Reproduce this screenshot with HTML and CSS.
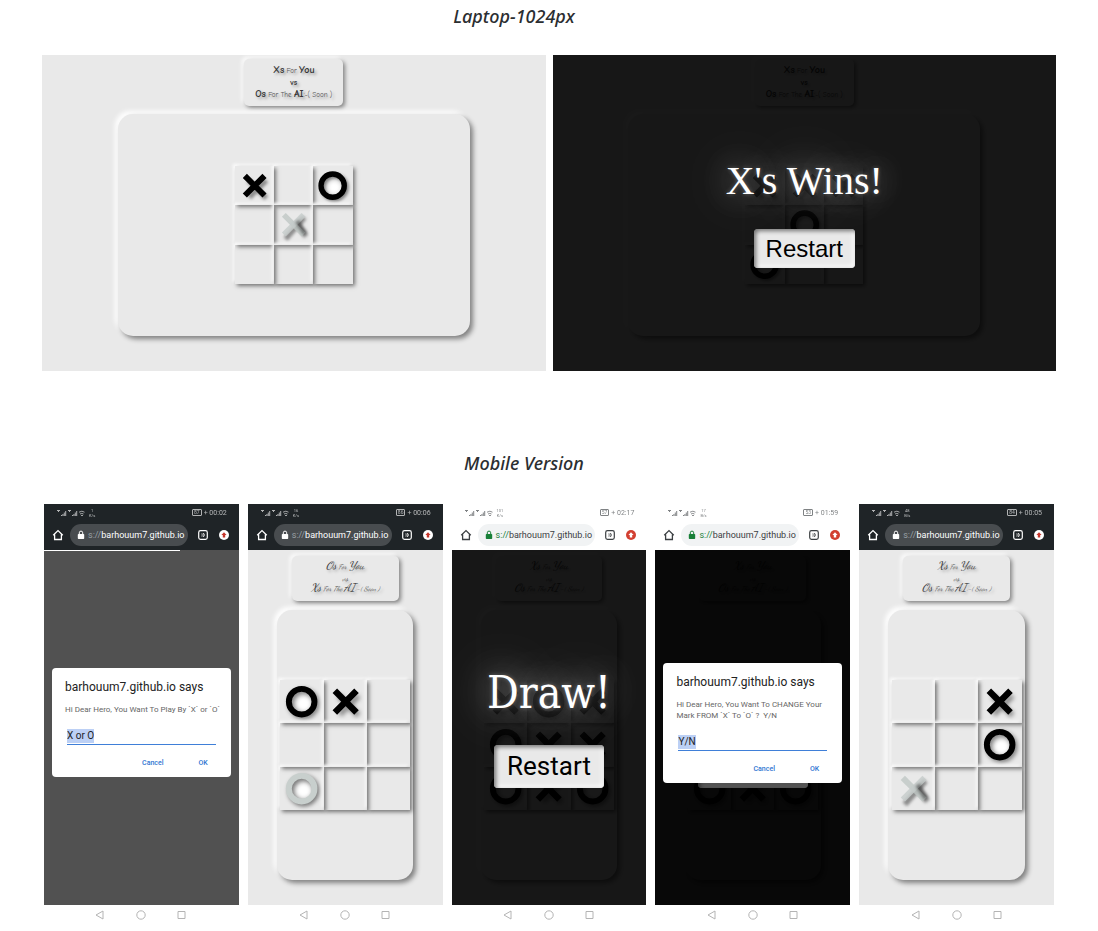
FILE: index.html
```html
<!DOCTYPE html>
<html lang="en">
<head>
<meta charset="utf-8">
<meta name="viewport" content="width=device-width, initial-scale=1">
<title>Tic Tac Toe previews</title>
<link rel="stylesheet" href="styles.css">
</head>
<body>
<svg class="sprite" aria-hidden="true">
  <defs>
    <filter id="soft" x="-50%" y="-50%" width="200%" height="200%"><feGaussianBlur stdDeviation="1.6"/></filter>
    <filter id="softer" x="-50%" y="-50%" width="200%" height="200%"><feGaussianBlur stdDeviation="2"/></filter>
  </defs>
  <symbol id="x" viewBox="0 0 44 44">
    <path d="M14 15l20 20M34 15L15 34" transform="translate(1 1)" stroke="#000" stroke-opacity=".4" stroke-width="6" filter="url(#softer)" fill="none"/>
    <path d="M11 11l22 22M33 11L11 33" stroke="#000" stroke-width="6.500" fill="none"/>
  </symbol>
  <symbol id="o" viewBox="0 0 44 44">
    <circle cx="24" cy="24" r="13" stroke="#000" stroke-opacity=".45" stroke-width="6" filter="url(#softer)" fill="none"/>
    <circle cx="24" cy="24" r="6" fill="#fff" filter="url(#soft)"/>
    <circle cx="22" cy="22" r="13" stroke="#000" stroke-width="6" fill="none"/>
  </symbol>
  <symbol id="x-ghost" viewBox="0 0 44 44">
    <path d="M24 20l12 15M34 14L13 38" stroke="#000" stroke-opacity=".4" stroke-width="6" filter="url(#soft)" fill="none"/>
    <path d="M11 11l22 22" stroke="#bfc7c4" stroke-opacity=".8" stroke-width="6" fill="none"/>
    <path d="M33 11L11 33" stroke="#c5ccca" stroke-opacity=".8" stroke-width="6" fill="none"/>
    <path d="M26 18l9 14" stroke="#000" stroke-opacity=".4" stroke-width="5" filter="url(#soft)" fill="none"/>
  </symbol>
  <symbol id="o-ghost" viewBox="0 0 44 44">
    <circle cx="24" cy="24" r="13" stroke="#000" stroke-opacity=".5" stroke-width="6" filter="url(#softer)" fill="none"/>
    <circle cx="24" cy="24" r="6" fill="#fff" filter="url(#soft)"/>
    <circle cx="22" cy="22" r="13" stroke="#c8cfcd" stroke-width="6" fill="none"/>
  </symbol>
  <symbol id="signal" viewBox="0 0 28 8">
    <g fill="currentColor">
      <path d="M0 1h3v1H0zM1 2h1v1H1zM4 6h1v1H4zM5.400 5h1v2h-1zM6.800 3.600h1V7h-1zM8.200 2h1v5h-1z"/>
      <path d="M11 1h3v1h-3zM12 2h1v1h-1zM15 6h1v1h-1zM16.400 5h1v2h-1zM17.800 3.600h1V7h-1zM19.200 2h1v5h-1z"/>
    </g>
    <path d="M22 3.200q3-2 5.500 0M23 5q1.800-1.200 3.500 0M24 6.500h2" fill="none" stroke="currentColor" stroke-width=".9"/>
  </symbol>
  <symbol id="home" viewBox="0 0 12 12"><path d="M1.200 6.200L6 1.600l4.800 4.600M2.600 5.400v5.100h6.800V5.400" fill="none" stroke="currentColor" stroke-width="1.300"/></symbol>
  <symbol id="lock" viewBox="0 0 8 10"><rect x=".8" y="4" width="6.400" height="5" rx=".7" fill="currentColor"/><path d="M2.300 4V2.800a1.700 1.700 0 0 1 3.400 0V4" fill="none" stroke="currentColor"/></symbol>
  <symbol id="tabs" viewBox="0 0 10 10"><rect x=".7" y=".7" width="8.600" height="8.600" rx="1.800" fill="none" stroke="currentColor" stroke-width="1.200"/><path d="M3.300 4h.8M3.300 6h.8M5 3.500h.8q1.300 1.500 0 3H5z" fill="none" stroke="currentColor" stroke-width=".8"/></symbol>
  <symbol id="update" viewBox="0 0 10 10"><circle class="disc" cx="5" cy="5" r="5"/><path class="arrow" d="M5 2.200L7.600 5H6.200v2.500H3.800V5H2.400z"/></symbol>
  <symbol id="keys" viewBox="0 0 92 10">
    <path d="M8 1v8L1 5zM83 1.500h7v7h-7z" fill="none" stroke="#b4b4b4"/><circle cx="46" cy="5" r="4.200" fill="none" stroke="#b4b4b4"/>
  </symbol>
</svg>

<main class="page">
  <section class="laptops">
    <h2 class="caption caption-laptop">Laptop-1024px</h2>
    <div class="laptop-row">
      <article class="screen laptop">
        <p class="card"><span><b>Xs</b> For <b>You</b></span><span><b class="vs">vs</b></span><span><b>Os</b> For The <b>AI</b>:-( Soon )</span></p>
        <div class="panel"><div class="board">
          <div class="cell"><svg><use href="#x"/></svg></div><div class="cell"></div><div class="cell"><svg><use href="#o"/></svg></div>
          <div class="cell"></div><div class="cell"><svg><use href="#x-ghost"/></svg></div><div class="cell"></div>
          <div class="cell"></div><div class="cell"></div><div class="cell"></div>
        </div></div>
      </article>
      <article class="screen laptop">
        <p class="card"><span><b>Xs</b> For <b>You</b></span><span><b class="vs">vs</b></span><span><b>Os</b> For The <b>AI</b>:-( Soon )</span></p>
        <div class="panel"><div class="board">
          <div class="cell"><svg><use href="#x"/></svg></div><div class="cell"><svg><use href="#x"/></svg></div><div class="cell"><svg><use href="#x"/></svg></div>
          <div class="cell"></div><div class="cell"><svg><use href="#o"/></svg></div><div class="cell"></div>
          <div class="cell"><svg><use href="#o"/></svg></div><div class="cell"></div><div class="cell"></div>
        </div></div>
        <div class="result"><strong class="message">X's Wins!</strong><button class="restart" type="button">Restart</button></div>
      </article>
    </div>
  </section>

  <section class="mobiles">
    <h2 class="caption caption-mobile">Mobile Version</h2>
    <div class="phone-row">

      <article class="phone">
        <header class="chrome dark">
          <div class="status"><svg class="signal"><use href="#signal"/></svg><span class="rate">1<br>K/s</span><span class="battery">87</span><span class="clock">+ 00:02</span></div>
          <div class="toolbar"><svg class="home"><use href="#home"/></svg><div class="address"><svg class="lock"><use href="#lock"/></svg><span class="url"><span class="scheme">s://</span>barhouum7.github.io</span></div><svg class="tabs"><use href="#tabs"/></svg><svg class="update"><use href="#update"/></svg></div>
        </header>
        <div class="screen mobile blank">
          <div class="backdrop">
            <div class="progress"></div>
            <form class="dialog">
              <h3 class="dialog-title">barhouum7.github.io says</h3>
              <label class="dialog-text" for="mark">Hi Dear Hero, You Want To Play By `X` or `O`</label>
              <div class="field"><input class="entry" id="mark" type="text" value="X or O"></div>
              <div class="actions"><button type="button">Cancel</button><button type="button">OK</button></div>
            </form>
          </div>
        </div>
        <footer class="keys"><svg><use href="#keys"/></svg></footer>
      </article>

      <article class="phone">
        <header class="chrome dark">
          <div class="status"><svg class="signal"><use href="#signal"/></svg><span class="rate">16<br>K/s</span><span class="battery">86</span><span class="clock">+ 00:06</span></div>
          <div class="toolbar"><svg class="home"><use href="#home"/></svg><div class="address"><svg class="lock"><use href="#lock"/></svg><span class="url"><span class="scheme">s://</span>barhouum7.github.io</span></div><svg class="tabs"><use href="#tabs"/></svg><svg class="update"><use href="#update"/></svg></div>
        </header>
        <div class="screen mobile">
          <p class="card"><span><b>Os</b> For <b>You</b></span><span class="vs">vs</span><span><b>Xs</b> For The <b>AI</b>:-( Soon )</span></p>
          <div class="panel"><div class="board">
            <div class="cell"><svg><use href="#o"/></svg></div><div class="cell"><svg><use href="#x"/></svg></div><div class="cell"></div>
            <div class="cell"></div><div class="cell"></div><div class="cell"></div>
            <div class="cell"><svg><use href="#o-ghost"/></svg></div><div class="cell"></div><div class="cell"></div>
          </div></div>
        </div>
        <footer class="keys"><svg><use href="#keys"/></svg></footer>
      </article>

      <article class="phone">
        <header class="chrome light">
          <div class="status"><svg class="signal"><use href="#signal"/></svg><span class="rate">101<br>K/s</span><span class="battery">57</span><span class="clock">+ 02:17</span></div>
          <div class="toolbar"><svg class="home"><use href="#home"/></svg><div class="address"><svg class="lock"><use href="#lock"/></svg><span class="url"><span class="scheme">s://</span>barhouum7.github.io</span></div><svg class="tabs"><use href="#tabs"/></svg><svg class="update"><use href="#update"/></svg></div>
        </header>
        <div class="screen mobile">
          <p class="card"><span><b>Xs</b> For <b>You</b></span><span class="vs">vs</span><span><b>Os</b> For The <b>AI</b>:-( Soon )</span></p>
          <div class="panel"><div class="board">
            <div class="cell"><svg><use href="#x"/></svg></div><div class="cell"><svg><use href="#o"/></svg></div><div class="cell"><svg><use href="#x"/></svg></div>
            <div class="cell"><svg><use href="#o"/></svg></div><div class="cell"><svg><use href="#x"/></svg></div><div class="cell"><svg><use href="#x"/></svg></div>
            <div class="cell"><svg><use href="#o"/></svg></div><div class="cell"><svg><use href="#x"/></svg></div><div class="cell"><svg><use href="#o"/></svg></div>
          </div></div>
          <div class="result"><strong class="message">Draw!</strong><button class="restart" type="button">Restart</button></div>
        </div>
        <footer class="keys"><svg><use href="#keys"/></svg></footer>
      </article>

      <article class="phone">
        <header class="chrome light">
          <div class="status"><svg class="signal"><use href="#signal"/></svg><span class="rate">17<br>B/s</span><span class="battery">53</span><span class="clock">+ 01:59</span></div>
          <div class="toolbar"><svg class="home"><use href="#home"/></svg><div class="address"><svg class="lock"><use href="#lock"/></svg><span class="url"><span class="scheme">s://</span>barhouum7.github.io</span></div><svg class="tabs"><use href="#tabs"/></svg><svg class="update"><use href="#update"/></svg></div>
        </header>
        <div class="screen mobile">
          <p class="card"><span><b>Xs</b> For <b>You</b></span><span class="vs">vs</span><span><b>Os</b> For The <b>AI</b>:-( Soon )</span></p>
          <div class="panel"><div class="board">
            <div class="cell"></div><div class="cell"></div><div class="cell"></div>
            <div class="cell"></div><div class="cell"></div><div class="cell"></div>
            <div class="cell"><svg><use href="#o"/></svg></div><div class="cell"><svg><use href="#x"/></svg></div><div class="cell"><svg><use href="#o"/></svg></div>
          </div></div>
          <div class="result"><strong class="message"></strong><button class="restart" type="button" aria-label="Restart"></button></div>
          <div class="backdrop">
            <form class="dialog">
              <h3 class="dialog-title">barhouum7.github.io says</h3>
              <label class="dialog-text" for="change">Hi Dear Hero, You Want To CHANGE Your Mark FROM `X` To `O` ?&nbsp; Y/N</label>
              <div class="field"><input class="entry" id="change" type="text" value="Y/N"></div>
              <div class="actions"><button type="button">Cancel</button><button type="button">OK</button></div>
            </form>
          </div>
        </div>
        <footer class="keys"><svg><use href="#keys"/></svg></footer>
      </article>

      <article class="phone">
        <header class="chrome dark">
          <div class="status"><svg class="signal"><use href="#signal"/></svg><span class="rate">48<br>B/s</span><span class="battery">84</span><span class="clock">+ 00:05</span></div>
          <div class="toolbar"><svg class="home"><use href="#home"/></svg><div class="address"><svg class="lock"><use href="#lock"/></svg><span class="url"><span class="scheme">s://</span>barhouum7.github.io</span></div><svg class="tabs"><use href="#tabs"/></svg><svg class="update"><use href="#update"/></svg></div>
        </header>
        <div class="screen mobile">
          <p class="card"><span><b>Xs</b> For <b>You</b></span><span class="vs">vs</span><span><b>Os</b> For The <b>AI</b>:-( Soon )</span></p>
          <div class="panel"><div class="board">
            <div class="cell"></div><div class="cell"></div><div class="cell"><svg><use href="#x"/></svg></div>
            <div class="cell"></div><div class="cell"></div><div class="cell"><svg><use href="#o"/></svg></div>
            <div class="cell"><svg><use href="#x-ghost"/></svg></div><div class="cell"></div><div class="cell"></div>
          </div></div>
        </div>
        <footer class="keys"><svg><use href="#keys"/></svg></footer>
      </article>

    </div>
  </section>
</main>
</body>
</html>
```

FILE: styles.css
```css
* { box-sizing: border-box; }
body { margin: 0; background: #fff; font-family: "Open Sans", sans-serif; }
.sprite { position: absolute; width: 0; height: 0; }
.page { padding: 4px 42px 6px; }

.caption {
  margin: 0;
  font: italic 500 18px/24px "Noto Sans", "Open Sans", sans-serif;
  color: #2b2e31;
  text-align: center;
}
.caption-laptop { padding-right: 70px; }
.caption-mobile { padding-right: 50px; }

.laptop-row { display: grid; grid-template-columns: repeat(2, minmax(0, 1fr)); gap: 7px; margin-top: 27px; }
.mobiles { margin-top: 80px; padding: 0 2px; }
.phone-row { display: grid; grid-template-columns: repeat(5, minmax(0, 1fr)); gap: 9px; margin-top: 29px; }

/* Game screen */
.screen { position: relative; overflow: hidden; display: flex; flex-direction: column; align-items: center; background: #e9e9e9; }
.card {
  display: flex; flex-direction: column; align-items: center; justify-content: center;
  margin: 0; white-space: nowrap; color: #555;
  border-radius: 5px;
  box-shadow: 2px 2px 4px rgba(0, 0, 0, .45), -2px -2px 4px #fff;
  text-shadow: 2px 2px 3px rgba(0, 0, 0, .35);
}
.card b { color: #333; line-height: 0; }
.panel {
  display: grid; place-items: center;
  width: 70%;
  border-radius: 15px;
  box-shadow: 3px 3px 5px rgba(0, 0, 0, .45), -3px -3px 5px #fff;
}
.board { display: grid; grid: repeat(3, 1fr) / repeat(3, 1fr); }
.cell { min-width: 0; min-height: 0; box-shadow: 2px 2px 4px rgba(0, 0, 0, .5), -2px -2px 3px #fff; }
.cell svg { display: block; width: 100%; height: 100%; }

.laptop { padding: 4px 0 35px; gap: 8px; }
.laptop .card { padding: 6px 11px 5px; font: 7px/12px "Comic Sans MS", "Comic Neue", "Open Sans", sans-serif; }
.laptop .card b { font-size: 10px; }
.laptop .card .vs { font-size: 8px; }
.laptop .panel { min-height: 222px; }
.laptop .board { width: 118px; height: 118px; }

.mobile { padding: 6px 0 25px; gap: 9px; }
.mobile .card { padding: 6px 19px; font: italic 7px/11px "Dancing Script", "Liberation Serif", serif; }
.mobile .card b { font-size: 11px; font-weight: 400; }
.mobile .card .vs { font-size: 8px; }
.mobile .panel { min-height: 270px; }
.mobile .board { width: 130px; height: 130px; }
.blank { min-height: 355px; }

/* Result overlay */
.result {
  position: absolute; inset: 0;
  display: flex; flex-direction: column; align-items: center; justify-content: center; gap: 24px;
  padding-bottom: 2px;
  background: rgba(0, 0, 0, .9);
}
.message {
  font-weight: 400; color: #fff;
  text-shadow: 0 0 4px rgba(255, 255, 255, .3), 0 0 30px rgba(255, 255, 255, .5), 0 0 60px rgba(255, 255, 255, .6);
}
.restart {
  border: 0; border-radius: 4px; background: #e9e9e9; color: #000;
  box-shadow: inset 2px 2px 4px rgba(0, 0, 0, .5), inset -2px -2px 4px #fff;
}
.laptop .message { font-family: "Liberation Serif", serif; font-size: 40px; line-height: 48px; }
.laptop .restart { padding: 5px 12px; font: 24px/29px "Liberation Sans", sans-serif; }
.mobile .message { min-height: 56px; font-family: "DejaVu Serif Condensed", "DejaVu Serif", serif; font-size: 44px; line-height: 56px; }
.mobile .restart { min-width: 110px; min-height: 43px; padding: 6px 12px; font: 26px/31px Roboto, sans-serif; }

/* Phone browser */
.phone { font-family: Roboto, sans-serif; }
.chrome { height: 46px; padding: 3px 12px 0 13px; }
.dark { background: #1f2427; color: #fff; }
.light { background: #fff; color: #3c4043; }
.status { display: flex; align-items: center; height: 11px; font-size: 7px; opacity: .65; }
.signal { width: 28px; height: 8px; }
.rate { margin-left: 4px; font-size: 4px; line-height: 5px; text-align: center; }
.battery { margin-left: auto; padding: 0 1px; border: 1px solid currentColor; border-radius: 1px; font-size: 5px; line-height: 5px; }
.clock { margin-left: 2px; }
.toolbar { display: flex; align-items: center; margin: 6px -4px 0 -5px; }
.home { flex: none; width: 12px; height: 12px; margin-right: 6px; }
.address { display: flex; align-items: center; gap: 3px; flex: 1; min-width: 0; height: 22px; padding-left: 7px; border-radius: 11px; }
.dark .address { background: #484c4f; }
.light .address { background: #f1f3f4; }
.lock { flex: none; width: 8px; height: 10px; }
.light .lock, .light .scheme { color: #188038; }
.dark .scheme { color: #9aa0a6; }
.url { font-size: 9px; line-height: 12px; white-space: nowrap; }
.tabs { flex: none; width: 10px; height: 10px; margin-left: 10px; }
.update { flex: none; width: 10px; height: 10px; margin: 0 2px 0 11px; }
.dark .update { --disc: #fff; --arrow: #c5362b; }
.light .update { --disc: #d23f31; --arrow: #fff; }
.disc { fill: var(--disc); }
.arrow { fill: var(--arrow); }
.keys { display: grid; place-items: center; height: 20px; }
.keys svg { width: 92px; height: 10px; }

/* Prompt dialog */
.backdrop {
  position: absolute; inset: 0;
  display: grid; place-items: center;
  padding: 0 8px 10px;
  background: rgba(0, 0, 0, .65);
}
.progress { position: absolute; top: 0; left: 0; width: 70%; height: 1px; background: #fff; }
.dialog { width: 100%; padding: 12px 10px 8px 13px; border-radius: 4px; background: #fff; }
.dialog-title { margin: 0 0 10px; font-size: 12px; font-weight: 400; line-height: 14px; color: #222; white-space: nowrap; }
.dialog-text { display: block; font-size: 8px; line-height: 11px; color: #666; }
.field { display: flex; margin: 14px 5px 0 2px; padding-bottom: 1px; border-bottom: 1px solid #3f7fd8; }
.entry {
  field-sizing: content;
  padding: 0; border: 0; outline: 0;
  background: #bcd0f5; color: #222;
  font: 10px/14px Roboto, sans-serif;
}
.actions { display: flex; justify-content: flex-end; gap: 35px; margin-top: 12px; padding-right: 13px; }
.actions button { padding: 0; border: 0; background: none; color: #2f76d2; font: 500 7px/12px Roboto, sans-serif; }
```
